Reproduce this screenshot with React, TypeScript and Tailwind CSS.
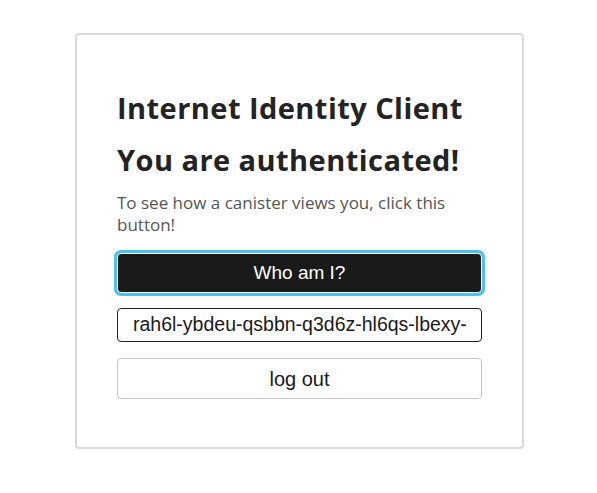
export default function App() {
  return (
    <div className="flex min-h-[493px] w-full justify-center bg-white pl-[2px] pt-[33px]">
      <div className="w-[449px] h-[416px] self-start rounded-[4px] border-2 border-[#d9d9d9] px-[40px] pt-[47px]">
        <h1 className="text-[29px] leading-[52px] font-bold text-[#232323] tracking-[0.45px] [font-family:'Open_Sans',sans-serif]">
          Internet Identity Client
        </h1>
        <h2 className="text-[29px] leading-[52px] font-bold text-[#232323] tracking-[0.45px] [font-family:'Open_Sans',sans-serif]">
          You are authenticated!
        </h2>
        <p className="mt-[6px] text-[17px] leading-[22px] text-[#555] [font-family:'Open_Sans',sans-serif]">
          To see how a canister views you, click this button!
        </p>
        <button className="mt-[17px] block h-[40px] w-full rounded-[4px] border border-white bg-[#1a1a1a] text-[19px] text-white ring-[3px] ring-[#4cc3ee] [font-family:'Liberation_Sans',Arial,sans-serif]">
          Who am I?
        </button>
        <div className="mt-[15px] flex h-[34px] w-full items-center overflow-hidden whitespace-nowrap rounded-[4px] border border-[#222] pl-[15px] text-[19.5px] text-[#1a1a1a] [font-family:'Liberation_Sans',Arial,sans-serif]">
          rah6l-ybdeu-qsbbn-q3d6z-hl6qs-lbexy-
        </div>
        <button className="mt-[16px] block h-[41px] w-full rounded-[4px] border border-[#c4c4c4] bg-white text-[20px] text-[#1a1a1a] [font-family:'Liberation_Sans',Arial,sans-serif]">
          log out
        </button>
      </div>
    </div>
  );
}
